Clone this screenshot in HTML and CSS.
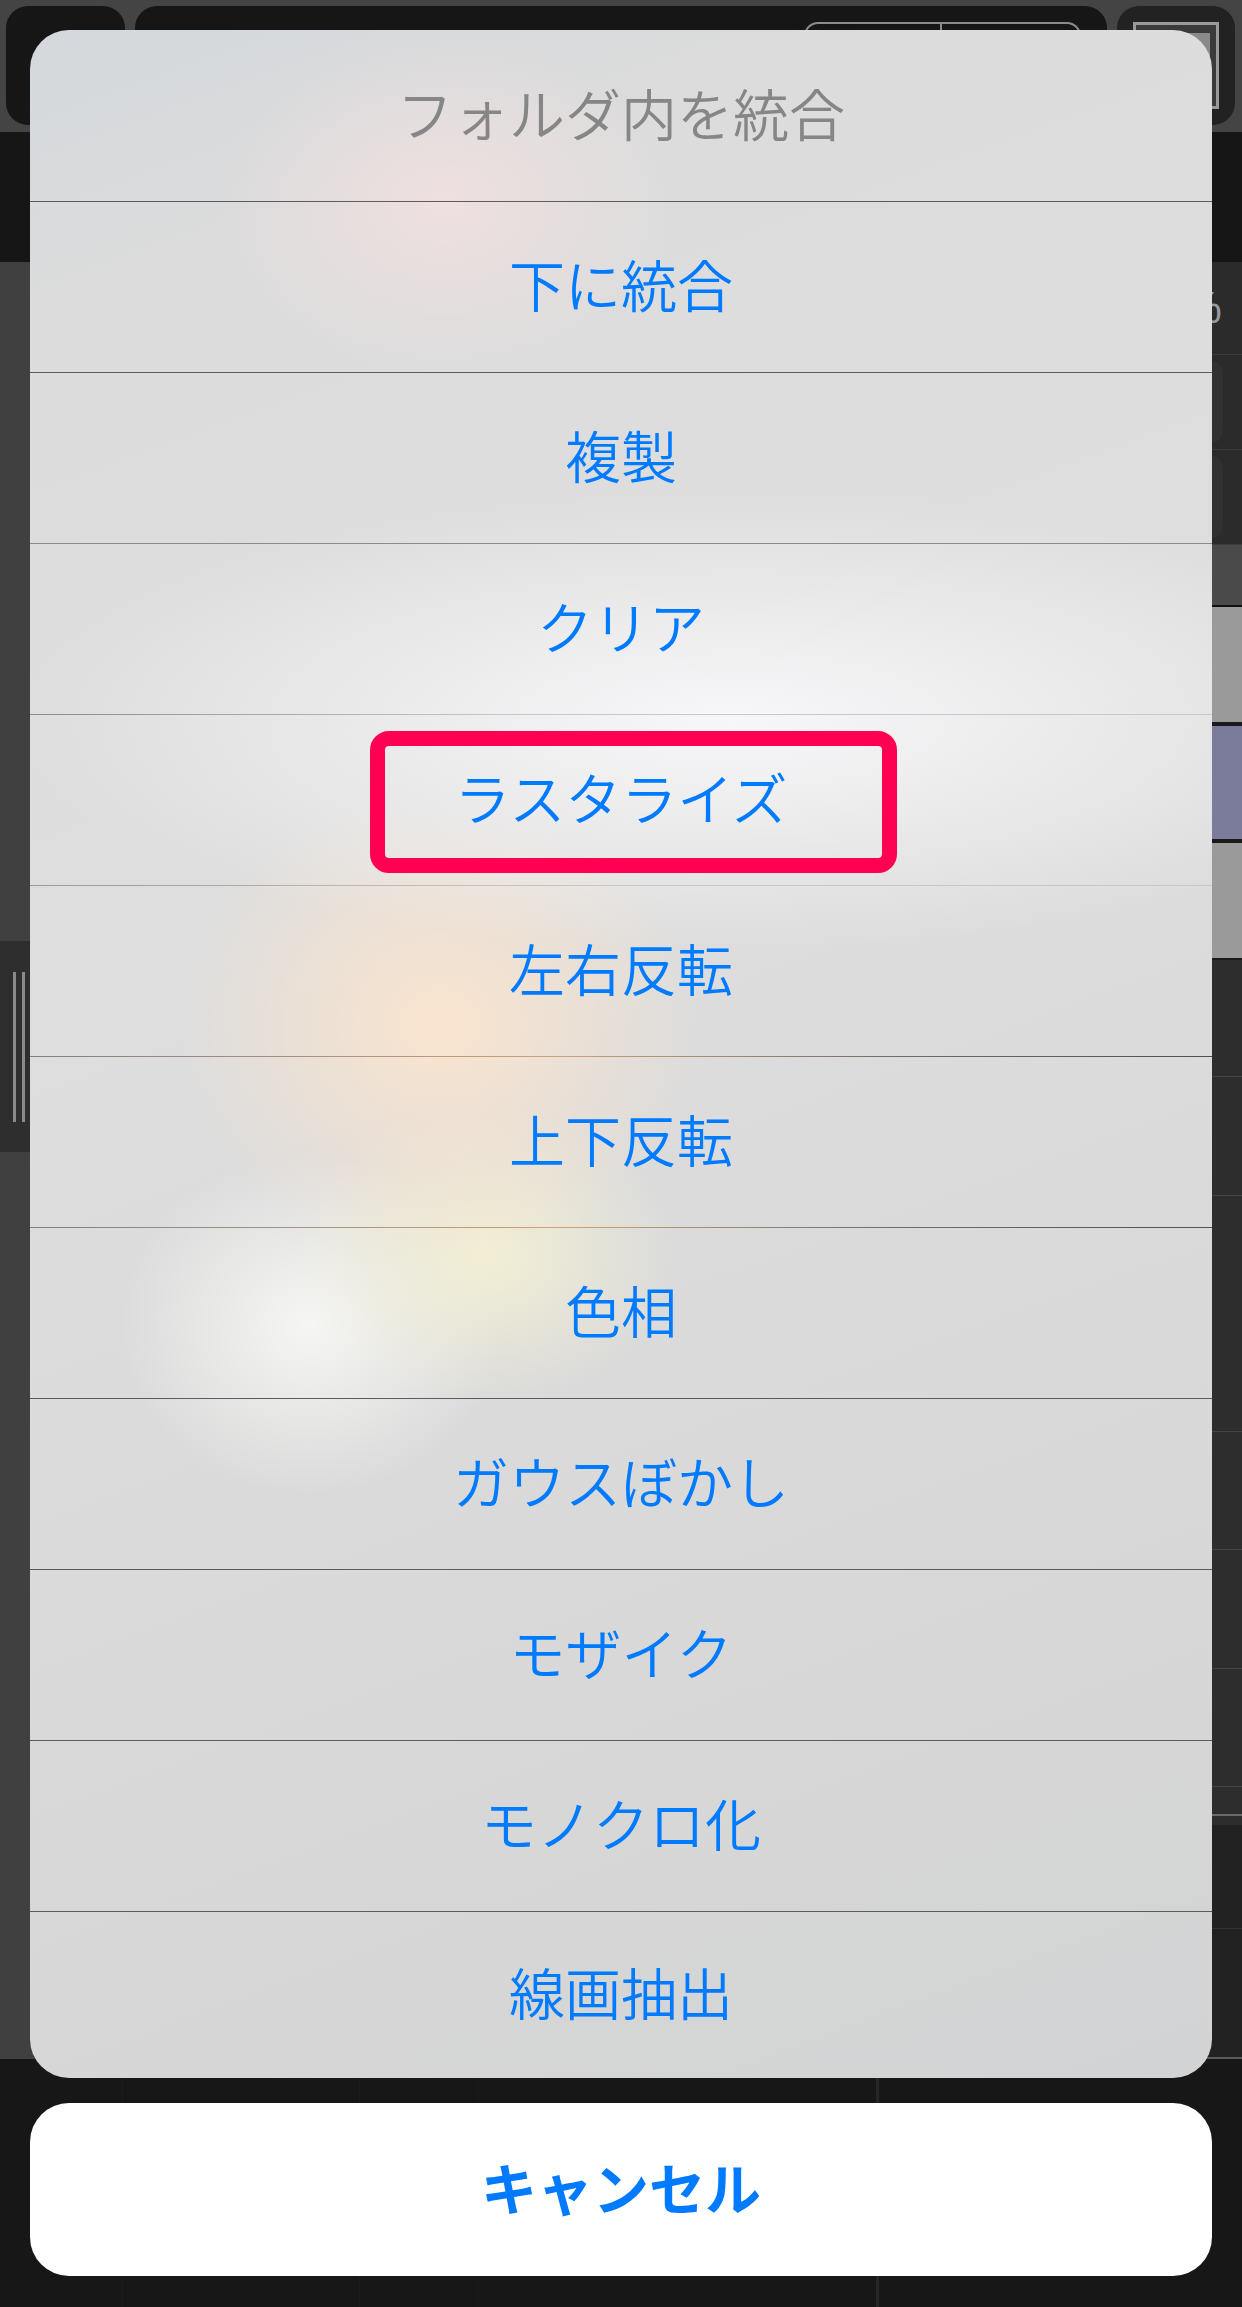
FILE: index.html
```html
<!DOCTYPE html>
<html lang="ja">
<head>
  <meta charset="UTF-8" />
  <meta name="viewport" content="width=device-width, initial-scale=1" />
  <title>フォルダ内を統合</title>
  <link rel="stylesheet" href="styles.css">
</head>
<body>
  <div class="screen">
    <!-- App behind the action sheet (dimmed) -->
    <div class="app">
      <header class="topbar">
        <div class="tb-box tb-back"></div>
        <div class="tb-box tb-main">
          <div class="seg"><span></span><span></span></div>
        </div>
        <div class="tb-box tb-layers">
          <div class="tb-icon"><span></span></div>
        </div>
      </header>
      <div class="toolbar"></div>

      <div class="workspace">
        <div class="canvas-area">
          <div class="side-panel">
            <span class="grip"></span>
            <span class="grip"></span>
          </div>
        </div>
        <aside class="layer-panel">
          <div class="lp-head">
            <div class="lp-opacity">100%</div>
            <div class="lp-row"><div class="lp-field"></div></div>
            <div class="lp-row"><div class="lp-field"></div></div>
          </div>
          <div class="lp-folder"></div>
          <div class="lp-thumb"></div>
          <div class="lp-thumb lp-thumb--active"></div>
          <div class="lp-thumb lp-thumb--last"></div>
          <div class="lp-list">
            <div class="lp-item" style="height: 117px"></div>
            <div class="lp-item" style="height: 119px"></div>
            <div class="lp-item" style="height: 236px"></div>
            <div class="lp-item" style="height: 118px"></div>
            <div class="lp-item" style="height: 119px"></div>
            <div class="lp-item" style="height: 118px"></div>
            <div class="lp-item lp-item--end" style="height: 29px"></div>
          </div>
          <div class="lp-foot">
            <div class="lp-foot-row"></div>
            <div class="lp-foot-row lp-foot-row--last"></div>
          </div>
        </aside>
      </div>

      <footer class="bottombar">
        <div class="bb-cell" style="width: 123px"></div>
        <div class="bb-cell" style="width: 237px"></div>
        <div class="bb-cell" style="width: 119px"></div>
        <div class="bb-cell bb-cell--wide" style="width: 400px"></div>
        <div class="bb-cell bb-cell--last"></div>
      </footer>
    </div>

    <!-- Action sheet -->
    <div class="sheet-layer">
      <div class="sheet">
        <div class="sheet-title">フォルダ内を統合</div>
        <div class="sheet-item">下に統合</div>
        <div class="sheet-item">複製</div>
        <div class="sheet-item sheet-item--soft">クリア</div>
        <div class="sheet-item sheet-item--light">
          ラスタライズ
          <span class="mark"></span>
        </div>
        <div class="sheet-item sheet-item--warm">左右反転</div>
        <div class="sheet-item sheet-item--orange">上下反転</div>
        <div class="sheet-item sheet-item--orange">色相</div>
        <div class="sheet-item">ガウスぼかし</div>
        <div class="sheet-item">モザイク</div>
        <div class="sheet-item">モノクロ化</div>
        <div class="sheet-item sheet-item--last">線画抽出</div>
      </div>
      <div class="sheet-cancel">キャンセル</div>
    </div>
  </div>
</body>
</html>
```

FILE: styles.css
```css
/* Base */
* {
  margin: 0;
  padding: 0;
  box-sizing: border-box;
}
body {
  background: #171717;
  font-family: "Noto Sans CJK JP", "Noto Sans", sans-serif;
}
.screen {
  position: relative;
  width: 1242px;
  height: 2307px;
  overflow: hidden;
}

/* ---- dimmed app underneath ---- */
.app {
  display: flex;
  flex-direction: column;
  height: 100%;
}
.topbar {
  display: flex;
  gap: 10px;
  height: 132px;
  padding: 6px 7px 7px 6px;
  background: #444;
}
.tb-box {
  background: #161616;
  border-radius: 22px;
}
.tb-back {
  width: 119px;
}
.tb-main {
  width: 972px;
  padding: 16px 0 0 669px;
}
.seg {
  display: flex;
  width: 277px;
  height: 80px;
  border: 2px solid #8c8c8c;
  border-radius: 14px;
}
.seg span {
  width: 136px;
  border-right: 2px solid #8c8c8c;
}
.seg span:last-child {
  border-right: 0;
}
.tb-layers {
  width: 118px;
  background: #222;
  padding: 16px;
}
.tb-icon {
  width: 86px;
  height: 87px;
  border: 3px solid #9a9a9a;
  background: #3a3a3a;
  padding: 8px 6px 0 40px;
}
.tb-icon span {
  display: block;
  height: 40px;
  background: #8a8a8a;
}
.toolbar {
  height: 130px;
  background: #161616;
}

.workspace {
  display: flex;
  height: 1797px;
}
.canvas-area {
  flex: 1;
  background: #404040;
  padding-top: 679px;
}
.side-panel {
  display: flex;
  gap: 6px;
  width: 70px;
  height: 211px;
  padding: 31px 0 0 13px;
  background: #2e2e2e;
}
.grip {
  width: 3px;
  height: 150px;
  background: #8a8a8a;
}

.layer-panel {
  width: 330px;
  display: flex;
  flex-direction: column;
  background: #2b2b2b;
  border-bottom: 2px solid #5a5a5a;
}
.lp-head {
  height: 283px;
}
.lp-opacity {
  height: 93px;
  padding: 24px 20px 0 0;
  text-align: right;
  font-family: "Liberation Sans", sans-serif;
  font-size: 44px;
  line-height: 1;
  color: #9a9a9a;
  border-bottom: 1px solid #3c3c3c;
}
.lp-row {
  height: 95px;
  padding: 6px 19px 6px 6px;
  border-bottom: 1px solid #3c3c3c;
}
.lp-field {
  height: 100%;
  background: #313131;
  border-radius: 12px;
}
.lp-folder {
  height: 62px;
  background: #4a4a4a;
  border-bottom: 2px solid #111;
}
.lp-thumb {
  height: 119px;
  background: #9a9a9a;
  border-bottom: 4px solid #1a1a1a;
}
.lp-thumb--active {
  height: 117px;
  background: #7b7b9b;
}
.lp-thumb--last {
  height: 117px;
  border-bottom-width: 2px;
}
.lp-list {
  height: 865px;
  background: #2d2d2d;
}
.lp-item {
  border-bottom: 1px solid #444;
}
.lp-item--end {
  border-bottom: 2px solid #6a6a6a;
}
.lp-foot {
  flex: 1;
  background: #222;
}
.lp-foot-row {
  height: 104px;
  border-bottom: 1px solid #333;
}
.lp-foot-row--last {
  border-bottom: 0;
}

.bottombar {
  flex: 1;
  display: flex;
  background: #171717;
}
.bb-cell {
  border-right: 1px solid #1b1b1b;
}
.bb-cell--wide {
  border-right: 3px solid #262626;
}
.bb-cell--last {
  flex: 1;
  border-right: 0;
}

/* ---- action sheet ---- */
.sheet-layer {
  position: absolute;
  inset: 0;
  display: flex;
  flex-direction: column;
  gap: 25px;
  padding: 30px 30px 0;
}
.sheet {
  height: 2048px;
  border-radius: 39px;
  overflow: hidden;
  background:
    radial-gradient(230px 170px at 415px 175px, rgba(240, 224, 224, 0.95), rgba(240, 224, 224, 0)),
    radial-gradient(720px 230px at 700px 690px, rgba(247, 247, 249, 1), rgba(247, 247, 249, 0)),
    radial-gradient(260px 240px at 410px 995px, rgba(250, 228, 206, 1), rgba(250, 228, 206, 0)),
    radial-gradient(190px 150px at 455px 1225px, rgba(244, 240, 212, 0.95), rgba(244, 240, 212, 0)),
    radial-gradient(190px 170px at 280px 1295px, rgba(247, 247, 245, 0.95), rgba(247, 247, 245, 0)),
    linear-gradient(160deg, #d4d8dc 0%, #dcdcdc 12%, #dedede 40%, #d8d8d8 75%, #d2d3d4 100%);
}
.sheet-title,
.sheet-item {
  display: flex;
  align-items: center;
  justify-content: center;
  padding-bottom: 8px;
  font-size: 56px;
  font-weight: 350;
  line-height: 1;
}
.sheet-title {
  height: 171px;
  color: #868686;
}
.sheet-item {
  position: relative;
  height: 171px;
  color: #007aff;
  border-top: 1px solid #5c5c60;
}
.sheet-item--soft {
  border-top-color: #8a8a8e;
}
.sheet-item--light {
  border-image: linear-gradient(90deg, #8a8a8e, #c6c6ce 40%, #c8c8d0) 1;
}
.sheet-item--warm {
  border-image: linear-gradient(90deg, #9a9a9a, #cfc4b0 40%, #c8c8c8) 1;
}
.sheet-item--orange {
  border-image: linear-gradient(90deg, #808080, #c9a27a 45%, #6a6a6a 75%, #505050) 1;
}
.sheet-item--last {
  height: 166px;
}
.mark {
  position: absolute;
  left: 340px;
  top: 16px;
  width: 527px;
  height: 142px;
  border: 15px solid #ff0052;
  border-radius: 19px;
}
.sheet-cancel {
  display: flex;
  align-items: center;
  justify-content: center;
  height: 173px;
  padding-bottom: 8px;
  background: #fff;
  border-radius: 39px;
  color: #007aff;
  font-size: 56px;
  font-weight: 700;
  line-height: 1;
}
```
